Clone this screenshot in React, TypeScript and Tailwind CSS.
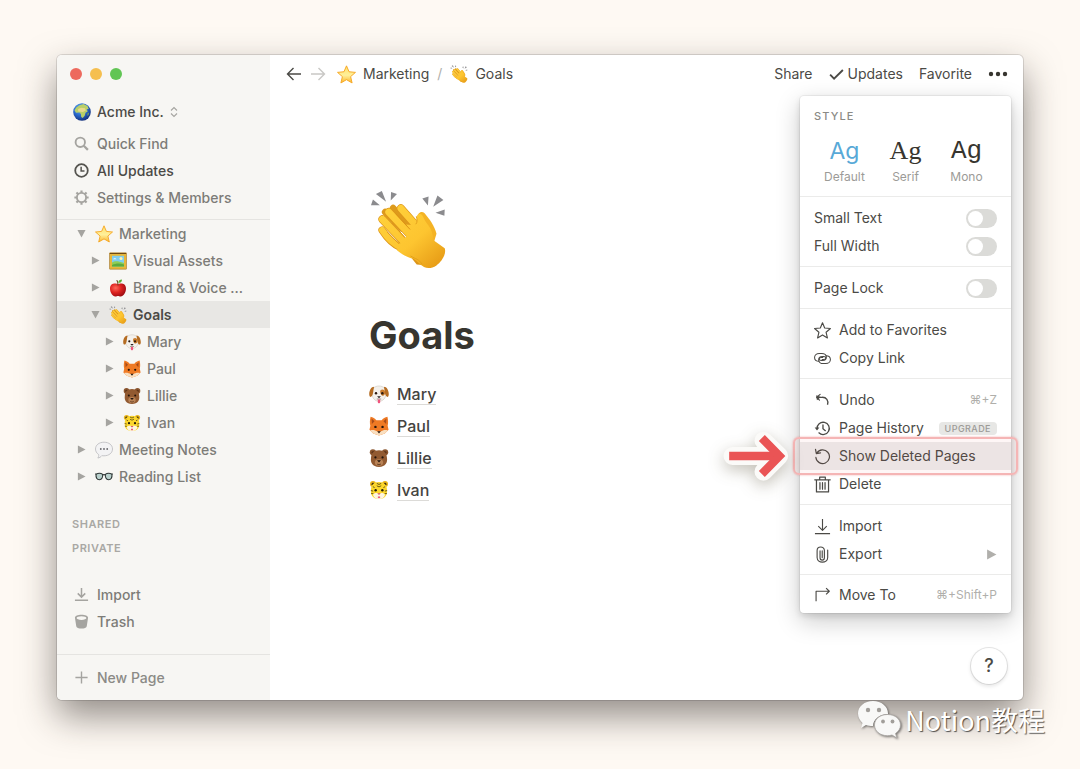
import React from "react";

type P = { className?: string };

const svgProps = (vb = "0 0 18 18") => ({ viewBox: vb, fill: "none", "aria-hidden": true as const });

/* ---------- pictograms ---------- */

const Star = ({ className }: P) => (
  <svg {...svgProps()} className={className}>
    <defs>
      <linearGradient id="starFill" x1="0" y1="0" x2="0" y2="1">
        <stop offset="0" stopColor="#ffdf6a" />
        <stop offset=".55" stopColor="#fff09a" />
        <stop offset="1" stopColor="#fbb52c" />
      </linearGradient>
    </defs>
    <path d="M9 .8l2.4 5.6 6.100.6-4.600 4 1.400 6L9 13.900 3.700 17l1.400-6L.5 7l6.100-.6z" fill="url(#starFill)" stroke="#f5a623" strokeWidth=".9" strokeLinejoin="round" />
  </svg>
);

const Clap = ({ className }: P) => (
  <svg {...svgProps("27 27 236 240")} className={className}>
    <defs>
      <linearGradient id="clapSkin" x1="60" y1="80" x2="220" y2="260" gradientUnits="userSpaceOnUse">
        <stop offset="0" stopColor="#ffd23c" />
        <stop offset=".6" stopColor="#fdc530" />
        <stop offset="1" stopColor="#e99f18" />
      </linearGradient>
    </defs>
    <path fill="#8b8b8e" d="M31 73l6-17 21 17zM46 39l18-9 13 33zM91 59l1-26 18 6zM187 53l19-6-2 27zM220 78l13-34 18 13zM227 96l28-10-1 19z" />
    <path fill="#dc9518" d="M148 226l22 27 18 2 8-28z" />
    <path fill="#f4b325" d="M172 110c0-12 12-22 22-12 14 17 30 38 36 62l-12 40-46-50z" />
    <g strokeLinecap="round">
      <path stroke="#dd9a1c" strokeWidth="20" d="M98 82l50 54M74 94l50 50" />
      <path stroke="#dd9518" strokeWidth="25" d="M122 83l58 66" />
      <path stroke="url(#clapSkin)" strokeWidth="21" d="M122 83l60 68" />
      <path stroke="#dd9518" strokeWidth="25" d="M85 94l75 80" />
      <path stroke="url(#clapSkin)" strokeWidth="21" d="M85 94l77 82" />
      <path stroke="#dd9518" strokeWidth="25" d="M66 116l74 78" />
      <path stroke="url(#clapSkin)" strokeWidth="21" d="M66 116l76 80" />
      <path stroke="#dd9518" strokeWidth="23" d="M65 149c14 22 32 42 58 54" />
      <path stroke="url(#clapSkin)" strokeWidth="19" d="M65 149c14 22 32 42 60 54" />
    </g>
    <path
      fill="url(#clapSkin)"
      d="M138 132l24 2c6-4 9-12 8-24 0-11 13-14 18-4 5 9 8 18 17 28 10 12 14 28 16 46l34 24c6 16-9 41-25 52-14 10-28 10-38 5-13-7-20-17-32-25-22-5-38-16-50-26l6-16 24-28z"
    />
    <path stroke="#dd9315" strokeWidth="3" strokeLinecap="round" d="M107 100l42 46M95 128l38 42M82 156l34 34" />
    <path stroke="#e2a01b" strokeWidth="3" strokeLinecap="round" d="M168 130c5-6 3-14 1-22M152 228c16 10 24 8 34 24" />
  </svg>
);

const Globe = ({ className }: P) => (
  <svg {...svgProps()} className={className}>
    <defs>
      <radialGradient id="ocean" cx=".4" cy=".3" r=".75">
        <stop offset="0" stopColor="#69b6f0" />
        <stop offset=".55" stopColor="#2866c8" />
        <stop offset="1" stopColor="#132b74" />
      </radialGradient>
    </defs>
    <circle cx="9" cy="9" r="8.800" fill="url(#ocean)" />
    <path d="M6.500 2.200l4-1.200 4 2 1.200 3-2 .3 1 2.200-2.200 1.200-.8 3-2 2.300-1.500-1-.3-3-1.400-1.500-3.500.2-1.500-2.500 1.800-2.600z" fill="#b9cf68" />
    <path d="M5 6.200l3-1.500 4 .6.8 2.200-3 1.500-4.500-.5z" fill="#e8d98d" />
    <path d="M14.500 10.500l1.500-1-.6 2.800-1 .5z" fill="#88b04e" />
  </svg>
);

const Picture = ({ className }: P) => (
  <svg {...svgProps()} className={className}>
    <rect x=".3" y=".5" width="17.400" height="17" rx=".8" fill="#a9781a" />
    <rect x="1" y="2" width="16" height="14.800" fill="#e7b73a" />
    <rect x="3" y="3.800" width="12" height="10.600" fill="#7fcdf0" />
    <circle cx="12" cy="6.500" r="1.500" fill="#fff6b0" />
    <path d="M4 7.200c1-1.500 3-1.200 3.500 0z" fill="#fff" />
    <path d="M3 10.500c3-2 6-1.500 12 .5v3.400H3z" fill="#8fce55" />
    <path d="M3 13c4-2 8-2 12-.5v1.900H3z" fill="#5cab3f" />
    <path d="M1 1.500h16" stroke="#6f4a12" />
  </svg>
);

const Apple = ({ className }: P) => (
  <svg {...svgProps()} className={className}>
    <defs>
      <radialGradient id="appleRed" cx=".35" cy=".35" r=".7">
        <stop offset="0" stopColor="#ff6a5a" />
        <stop offset=".5" stopColor="#de2320" />
        <stop offset="1" stopColor="#9d0c12" />
      </radialGradient>
    </defs>
    <path d="M9 5.200c2-1.300 8-1.600 8 4.300 0 4-2.700 8-5.300 8-1.300 0-1.700-.5-2.700-.5s-1.500.5-2.700.5C3.700 17.500 1 13.500 1 9.500c0-5.900 6-5.600 8-4.300z" fill="url(#appleRed)" />
    <path d="M9 6c0-2 0-3-1-4.500" stroke="#6b4320" strokeWidth="1.100" strokeLinecap="round" />
    <path d="M9.200 3.800C9.200 1.500 11 .4 13 .4c.1 2.300-1.500 3.600-3.800 3.400z" fill="#5cae35" />
  </svg>
);

const Dog = ({ className }: P) => (
  <svg {...svgProps()} className={className}>
    <path d="M9 1.800c4 0 6.500 2.700 6.500 6.200 0 4.500-3 7.600-6.500 7.600S2.500 12.500 2.500 8c0-3.500 2.500-6.200 6.500-6.200z" fill="#f4f1ec" stroke="#c9c1b6" strokeWidth=".5" />
    <path d="M4.600 2.400C2 2.400.2 5.600.2 9.200c0 2.200 1.300 3.200 2.400 1.700C4 9 3.800 5 4.600 2.400zM13.400 2.400c2.600 0 4.400 3.200 4.400 6.800 0 2.200-1.300 3.200-2.400 1.700-1.400-1.900-1.200-5.900-2-8.500z" fill="#b56c22" />
    <path d="M10.500 5.500c1.500-1.300 4-.5 4 2 0 2-1 3.300-2.500 3-1.600-.4-2.500-3.600-1.500-5z" fill="#c97b2c" />
    <circle cx="6.300" cy="8.300" r="1.100" fill="#2b1a10" />
    <circle cx="12" cy="8.300" r="1.100" fill="#2b1a10" />
    <path d="M7.300 11h3.400L9 12.800z" fill="#2a2020" />
    <path d="M7 13.500h4" stroke="#7a6a60" strokeWidth=".6" />
    <path d="M7.900 14h2.200v2.200c0 1.500-2.200 1.500-2.200 0z" fill="#f0537c" />
  </svg>
);

const Fox = ({ className }: P) => (
  <svg {...svgProps()} className={className}>
    <path d="M1.400.6C3.500 1 5.500 2.300 6.600 3.800h4.800C12.500 2.300 14.500 1 16.600.6c.7 3 .8 5.800.2 8.200l.8 3.600-3.400 3.300L9 17.500l-5.200-1.800L.4 12.400l.8-3.600C.6 6.400.7 3.600 1.400.6z" fill="#ef7a24" />
    <path d="M2.300 2.300l2.700 2.500-2.400 2.400zM15.700 2.300L13 4.800l2.400 2.400z" fill="#a84c19" />
    <path d="M1 13c2.500-.8 5 0 6.500 1h3c1.500-1 4-1.800 6.500-1l-2.800 2.700L9 17.500l-5.200-1.800z" fill="#f9dfc0" />
    <circle cx="5.800" cy="9.800" r="1.100" fill="#26150c" />
    <circle cx="12.200" cy="9.800" r="1.100" fill="#26150c" />
    <path d="M7.400 13.800h3.200L9 15.800z" fill="#20160f" />
  </svg>
);

const Bear = ({ className }: P) => (
  <svg {...svgProps()} className={className}>
    <circle cx="3.500" cy="3.900" r="2.800" fill="#8a552e" />
    <circle cx="14.500" cy="3.900" r="2.800" fill="#8a552e" />
    <circle cx="3.600" cy="4.100" r="1.400" fill="#5c3418" />
    <circle cx="14.400" cy="4.100" r="1.400" fill="#5c3418" />
    <path d="M9 2c5 0 7 3 7.200 7 .6 4-1.200 8-7.200 8s-7.800-4-7.200-8C2 5 4 2 9 2z" fill="#925a31" />
    <ellipse cx="9" cy="13" rx="3.700" ry="2.900" fill="#b98356" />
    <circle cx="5.800" cy="8.500" r="1" fill="#20120a" />
    <circle cx="12.200" cy="8.500" r="1" fill="#20120a" />
    <path d="M7.200 11h3.600L9 13.100z" fill="#21140c" />
    <path d="M7.300 14.400c1 .8 2.400.8 3.400 0" stroke="#4b2a16" strokeWidth=".7" />
  </svg>
);

const Tiger = ({ className }: P) => (
  <svg {...svgProps()} className={className}>
    <circle cx="3.600" cy="3.600" r="2.700" fill="#e9b51a" />
    <circle cx="14.400" cy="3.600" r="2.700" fill="#e9b51a" />
    <circle cx="3.600" cy="3.800" r="1.300" fill="#403012" />
    <circle cx="14.400" cy="3.800" r="1.300" fill="#403012" />
    <path d="M9 1.800c5 0 7 3 7.200 6.700.6 4.500-1.200 8.500-7.200 8.500s-7.800-4-7.200-8.500C2 4.800 4 1.800 9 1.800z" fill="#fcd72c" />
    <path d="M3.500 13c2-1.500 3.500-1.700 5.500-.9 2-.8 3.500-.6 5.500.9-.8 2.800-2.500 4-5.500 4s-4.700-1.200-5.500-4z" fill="#fdf6df" />
    <path d="M7 3l2 1 2-1M7 5.200l2 1 2-1M1.700 9.500l2 .5M1.900 12.200l2 .1M16.300 9.500l-2 .5M16.100 12.200l-2 .1M3.500 6l1.500.8M14.500 6l-1.500.8" stroke="#5a4a14" strokeWidth=".8" />
    <circle cx="6" cy="9.200" r="1.100" fill="#20190c" />
    <circle cx="12" cy="9.200" r="1.100" fill="#20190c" />
    <path d="M7.500 12h3L9 13.600z" fill="#d2485a" />
    <path d="M8 14.800h2v1.500H8z" fill="#e95b78" />
  </svg>
);

const Speech = ({ className }: P) => (
  <svg {...svgProps()} className={className}>
    <path d="M9 1.200c5 0 8.500 2.900 8.500 6.800S14 14.800 9 14.800c-.8 0-1.500 0-2.200-.2-.9 1.300-2.200 2.200-4 2.400.8-.9 1.100-2.200.8-3.500C1.700 12.200.5 10.300.5 8 .5 4.100 4 1.200 9 1.200z" fill="#f3f3f4" stroke="#b9b9bd" strokeWidth=".8" />
    <circle cx="5.800" cy="8" r=".9" fill="#66666a" />
    <circle cx="9" cy="8" r=".9" fill="#66666a" />
    <circle cx="12.200" cy="8" r=".9" fill="#66666a" />
  </svg>
);

const Glasses = ({ className }: P) => (
  <svg {...svgProps()} className={className}>
    <path d="M1 6.200c2-1 5.200-.9 6.700.2.200 2.800-.7 5.300-3.300 5.300S.8 9.500 1 6.200zM17 6.200c-2-1-5.200-.9-6.700.2-.2 2.800.7 5.300 3.300 5.300s3.600-2.200 3.400-5.500z" fill="#b8d0cc" stroke="#2d3534" strokeWidth="1.100" />
    <path d="M7.700 7c.8-.6 1.800-.6 2.600 0M.3 6h1M16.700 6h1" stroke="#2d3534" strokeWidth="1.100" />
  </svg>
);

/* ---------- line icons ---------- */

const line = { stroke: "currentColor", strokeWidth: 1.2, strokeLinecap: "round" as const, strokeLinejoin: "round" as const };

const SearchIcon = ({ className }: P) => (
  <svg {...svgProps("0 0 16 16")} className={className}>
    <circle cx="6.700" cy="6.700" r="5" stroke="currentColor" strokeWidth="2" />
    <path d="M10.400 10.400l4.400 4.400" stroke="currentColor" strokeWidth="2.400" />
  </svg>
);
const ClockIcon = ({ className }: P) => (
  <svg {...svgProps("0 0 16 16")} className={className}>
    <circle cx="8" cy="8" r="6.700" stroke="currentColor" strokeWidth="1.900" />
    <path d="M7.600 4v4.600h3.600" stroke="currentColor" strokeWidth="1.600" />
  </svg>
);
const GearIcon = ({ className }: P) => (
  <svg {...svgProps("0 0 16 16")} className={className}>
    <circle cx="8" cy="8" r="4.900" stroke="currentColor" strokeWidth="2" />
    <path d="M8 .4v2.800M8 12.800v2.800M.4 8h2.800M12.800 8h2.800M2.600 2.600l2 2M11.400 11.400l2 2M2.600 13.400l2-2M11.400 4.600l2-2" stroke="currentColor" strokeWidth="2.300" />
  </svg>
);
const DownloadIcon = ({ className }: P) => (
  <svg {...svgProps("0 0 16 16")} className={className}>
    <path d="M8 1v9.500M4 6.800l4 4 4-4M1 14.200h14" stroke="currentColor" strokeWidth="1.600" />
  </svg>
);
const BucketIcon = ({ className }: P) => (
  <svg {...svgProps("0 0 16 16")} className={className}>
    <path d="M8 .8c4 0 7 1.300 7 3.200l-1.400 9c-.2 1.600-2.600 2.500-5.600 2.500S2.600 14.600 2.400 13L1 4C1 2.100 4 .8 8 .8zm0 1.600c-3 0-5.200.8-5.200 1.900S5 6.300 8 6.300s5.200-.9 5.200-2S11 2.400 8 2.400z" fill="currentColor" fillRule="evenodd" />
  </svg>
);
const PlusIcon = ({ className }: P) => (
  <svg {...svgProps("0 0 16 16")} className={className}>
    <path d="M8 1.500v13M1.500 8h13" stroke="currentColor" strokeWidth="1.500" />
  </svg>
);
const UpDownIcon = ({ className }: P) => (
  <svg {...svgProps("0 0 8 12")} className={className}>
    <path d="M1 4.500l3-3 3 3M1 7.500l3 3 3-3" stroke="currentColor" strokeWidth="1.100" />
  </svg>
);
const ArrowIcon = ({ className }: P) => (
  <svg {...svgProps("0 0 16 16")} className={className}>
    <path d="M15 8H1.500M7.500 2L1.500 8l6 6" stroke="currentColor" strokeWidth="1.400" />
  </svg>
);
const CheckIcon = ({ className }: P) => (
  <svg {...svgProps("0 0 16 16")} className={className}>
    <path d="M1.200 8.200l4.200 4.300L14.800 3.200" stroke="currentColor" strokeWidth="2" />
  </svg>
);
const DotsIcon = ({ className }: P) => (
  <svg {...svgProps("0 0 20 6")} className={className}>
    <circle cx="3" cy="3" r="2.200" fill="currentColor" />
    <circle cx="10" cy="3" r="2.200" fill="currentColor" />
    <circle cx="17" cy="3" r="2.200" fill="currentColor" />
  </svg>
);
const StarOutline = ({ className }: P) => (
  <svg {...svgProps()} className={className}>
    <path d="M9 .8l2.300 5.600 6.100.5-4.600 4 1.400 6L9 13.700l-5.200 3.200 1.400-6-4.600-4 6.100-.5z" {...line} />
  </svg>
);
const LinkIcon = ({ className }: P) => (
  <svg {...svgProps()} className={className}>
    <path d="M5.500 12C2.500 12 .6 10.300.6 7.900S2.700 3.600 5.500 3.600h2.800c2.700 0 4.800 1.700 4.800 3.900s-1.700 3.600-3.900 3.600H7.600c-1.200 0-2-.7-2-1.600s.8-1.600 2-1.600h1.800" {...line} strokeWidth={1.100} />
    <path d="M12.500 6c3 0 4.900 1.700 4.900 4.100s-2.100 4.300-4.900 4.300H9.700c-2.700 0-4.800-1.700-4.800-3.900s1.700-3.600 3.900-3.600h1.600c1.200 0 2 .7 2 1.600s-.8 1.600-2 1.600H8.600" {...line} strokeWidth={1.100} />
  </svg>
);
const UndoIcon = ({ className }: P) => (
  <svg {...svgProps()} className={className}>
    <path d="M4 5.600h4.500c4.600-.2 7.200 3.400 5.800 7.900" {...line} strokeWidth={1.400} strokeLinecap="butt" />
    <path d="M2.300 3.500l.8 5.200 4.100-3.300z" fill="currentColor" />
    <path d="M6.500 2.500L2.800 5.600l3 3" {...line} />
  </svg>
);
const HistoryIcon = ({ className }: P) => (
  <svg {...svgProps()} className={className}>
    <path d="M3.200 9.300A6.500 6.500 0 1 1 5.200 13.600" {...line} strokeWidth={1.400} />
    <path d="M.7 8h5l-2.500 3.200z" fill="currentColor" />
    <path d="M9.500 5.300v4l2.500 2" {...line} strokeWidth={1.400} />
  </svg>
);
const RestoreIcon = ({ className }: P) => (
  <svg {...svgProps()} className={className}>
    <path d="M3 5.500A7.200 7.200 0 1 1 2 10M1.600 1.500l.9 4.400 4.400-.7" {...line} strokeWidth={1.300} />
  </svg>
);
const BinIcon = ({ className }: P) => (
  <svg {...svgProps()} className={className}>
    <path d="M.8 4h16.400M6 4V1.200h6V4M2.600 4v12.900h12.800V4M6.300 6.900v7M9 6.900v7M11.700 6.900v7" {...line} strokeWidth={1.300} />
  </svg>
);
const ImportIcon = ({ className }: P) => (
  <svg {...svgProps()} className={className}>
    <path d="M9 1v12M4.500 8.700L9 13.200l4.500-4.500M1 16.500h16" {...line} strokeLinecap="butt" />
  </svg>
);
const ClipIcon = ({ className }: P) => (
  <svg {...svgProps()} className={className}>
    <path d="M6.400 5.200v7.300c0 3.300 4.600 3.300 4.600 0V4.800c0-5-7.700-5-7.700 0v7.500c0 6.400 11.200 6.400 11.200 0V4.300M8.700 5v7.500" {...line} />
  </svg>
);
const MoveIcon = ({ className }: P) => (
  <svg {...svgProps()} className={className}>
    <path d="M2.200 15V4.500h14M12.800 1.200l3.400 3.300-3.400 3.300" {...line} strokeLinecap="butt" />
  </svg>
);
const Triangle = ({ className }: P) => (
  <svg {...svgProps("0 0 10 10")} className={className}>
    <path d="M1 .5l8.500 4.500L1 9.500z" fill="currentColor" />
  </svg>
);

/* ---------- sidebar ---------- */

type IconType = (p: P) => React.JSX.Element;

const SideLink = ({ icon: Icon, label, strong }: { icon: IconType; label: string; strong?: boolean }) => (
  <a href="#" className={strong ? "flex h-[27px] items-center gap-2 pl-[17px] text-[#4b4a46]" : "flex h-[27px] items-center gap-2 pl-[17px] text-[#7d7c78]"}>
    <Icon className={strong ? "size-[15px] shrink-0 text-[#55544f]" : "size-[15px] shrink-0 text-[#a5a4a0]"} />
    {label}
  </a>
);

type Page = { icon: IconType; label: string; level: 0 | 1 | 2; open?: boolean; active?: boolean };

const pages: Page[] = [
  { icon: Star, label: "Marketing", level: 0, open: true },
  { icon: Picture, label: "Visual Assets", level: 1 },
  { icon: Apple, label: "Brand & Voice ...", level: 1 },
  { icon: Clap, label: "Goals", level: 1, open: true, active: true },
  { icon: Dog, label: "Mary", level: 2 },
  { icon: Fox, label: "Paul", level: 2 },
  { icon: Bear, label: "Lillie", level: 2 },
  { icon: Tiger, label: "Ivan", level: 2 },
  { icon: Speech, label: "Meeting Notes", level: 0 },
  { icon: Glasses, label: "Reading List", level: 0 },
];

const indent = ["pl-5", "pl-[34px]", "pl-12"];

const Sidebar = () => (
  <nav className="flex w-[213px] shrink-0 flex-col rounded-l-[5px] bg-[#f7f6f3] text-sm font-medium text-[#7d7c78]">
    <div className="flex h-[38px] items-center gap-2 pl-[13px]">
      <span className="size-3 rounded-full bg-[#ed6a5e]" />
      <span className="size-3 rounded-full bg-[#f5bf4f]" />
      <span className="size-3 rounded-full bg-[#61c554]" />
    </div>
    <button className="flex h-[37px] items-center gap-1.5 pl-4 text-left text-[#4b4a46]">
      <Globe className="size-[18px]" />
      Acme Inc.
      <UpDownIcon className="h-3 w-2 text-[#a5a4a0]" />
    </button>
    <SideLink icon={SearchIcon} label="Quick Find" />
    <SideLink icon={ClockIcon} label="All Updates" strong />
    <SideLink icon={GearIcon} label="Settings & Members" />
    <ul className="mt-2 border-t border-[#e5e4e1]">
      {pages.map((p) => (
        <li key={p.label}>
          <a href="#" className={`flex h-[27px] items-center ${indent[p.level]} ${p.active ? "bg-[#e8e7e4] font-semibold text-[#4b4a46]" : ""}`}>
            <Triangle className={p.open ? "size-[9px] shrink-0 rotate-90 text-[#a5a4a0]" : "size-[9px] shrink-0 text-[#a5a4a0]"} />
            <p.icon className="mr-1.5 ml-[9px] size-[18px] shrink-0" />
            {p.label}
          </a>
        </li>
      ))}
    </ul>
    <div className="mt-[22px] pl-[15px] text-[11px] leading-6 font-semibold tracking-wider text-[#a9a8a4]">
      <h2>SHARED</h2>
      <h2>PRIVATE</h2>
    </div>
    <div className="mt-[21px]">
      <SideLink icon={DownloadIcon} label="Import" />
      <SideLink icon={BucketIcon} label="Trash" />
    </div>
    <button className="mt-auto flex h-[46px] items-center gap-2 border-t border-[#e5e4e1] pl-[17px] text-[#8b8a86]">
      <PlusIcon className="size-[15px] text-[#a5a4a0]" />
      New Page
    </button>
  </nav>
);

/* ---------- options menu ---------- */

const Group = ({ children }: { children: React.ReactNode }) => <div className="border-t border-[#ebebea] pt-[7px] pb-1.5">{children}</div>;

const Toggle = ({ id, label }: { id: string; label: string }) => (
  <div className="flex h-7 items-center justify-between px-3.5">
    <label htmlFor={id}>{label}</label>
    <input
      id={id}
      type="checkbox"
      className="h-[19px] w-[31px] appearance-none rounded-full bg-[#dbdbd8] p-0.5 before:block before:size-[15px] before:rounded-full before:bg-white checked:bg-[#5aaee0] checked:before:ml-3"
    />
  </div>
);

const Item = ({ icon: Icon, label, children }: { icon: IconType; label: string; children?: React.ReactNode }) => (
  <button className="flex h-7 w-full items-center gap-2 px-3.5 text-left">
    <Icon className="size-[17px] shrink-0" />
    <span className="grow">{label}</span>
    {children}
  </button>
);

const styles = [
  { name: "Default", face: "text-[23px] text-[#58a9d7]" },
  { name: "Serif", face: "font-['Liberation_Serif',serif] text-[26px] text-[#37352f]" },
  { name: "Mono", face: "font-['Liberation_Mono',monospace] text-[26px] text-[#37352f]" },
];

const Pointer = ({ className }: P) => (
  <svg {...svgProps("22 145 206 162")} className={className}>
    <g stroke="#fbfaf8" strokeWidth="54" strokeLinejoin="round" strokeLinecap="round">
      <path d="M50 226h130M143 180l47 46-47 47" />
    </g>
    <path d="M40 226h145" stroke="#ea5455" strokeWidth="25" />
    <path d="M138 172l53 54-53 54" stroke="#ea5455" strokeWidth="25" />
  </svg>
);

const OptionsMenu = () => (
  <div className="absolute top-[41px] right-3 w-[211px] rounded bg-white text-sm text-[#4b4a46] shadow-[0_0_0_1px_rgba(15,15,15,0.05),0_3px_6px_rgba(15,15,15,0.12),0_8px_24px_rgba(15,15,15,0.22)]">
    <h2 className="px-3.5 pt-3 text-[11px] leading-4 font-medium tracking-widest text-[#8b8a86]">STYLE</h2>
    <div className="flex h-[72px] justify-between px-3.5 pt-[11px]">
      {styles.map((s) => (
        <button key={s.name} className="flex w-[61px] flex-col items-center">
          <span className={`flex h-8 items-center leading-8 ${s.face}`}>Ag</span>
          <span className="mt-0.5 text-xs leading-4 text-[#9c9b97]">{s.name}</span>
        </button>
      ))}
    </div>
    <Group>
      <Toggle id="small-text" label="Small Text" />
      <Toggle id="full-width" label="Full Width" />
    </Group>
    <Group>
      <Toggle id="page-lock" label="Page Lock" />
    </Group>
    <Group>
      <Item icon={StarOutline} label="Add to Favorites" />
      <Item icon={LinkIcon} label="Copy Link" />
    </Group>
    <Group>
      <Item icon={UndoIcon} label="Undo">
        <kbd className="font-[Inter,sans-serif] text-xs text-[#b0afab]">⌘+Z</kbd>
      </Item>
      <Item icon={HistoryIcon} label="Page History">
        <span className="rounded-sm bg-[#e7e7e5] px-1.5 text-[9px] leading-[13px] font-medium tracking-wider text-[#9c9b97]">UPGRADE</span>
      </Item>
      <div className="relative bg-[#ededec]">
        <Item icon={RestoreIcon} label="Show Deleted Pages" />
        <div className="pointer-events-none absolute -inset-x-[7px] -inset-y-[5px] rounded-md border-2 border-[#f5b5b5] bg-[#eb5757]/5 shadow-[0_0_2px_rgba(235,87,87,0.5)]" />
        <Pointer className="absolute top-1/2 right-full mr-2 h-[54px] w-[69px] -translate-y-1/2 drop-shadow-[0_5px_8px_rgba(60,50,20,0.3)]" />
      </div>
      <Item icon={BinIcon} label="Delete" />
    </Group>
    <Group>
      <Item icon={ImportIcon} label="Import" />
      <Item icon={ClipIcon} label="Export">
        <Triangle className="size-[11px] text-[#b0afab]" />
      </Item>
    </Group>
    <div className="border-t border-[#ebebea] pt-1.5 pb-1">
      <Item icon={MoveIcon} label="Move To">
        <kbd className="font-[Inter,sans-serif] text-xs text-[#b0afab]">⌘+Shift+P</kbd>
      </Item>
    </div>
  </div>
);

/* ---------- page ---------- */

const people = [
  { icon: Dog, name: "Mary" },
  { icon: Fox, name: "Paul" },
  { icon: Bear, name: "Lillie" },
  { icon: Tiger, name: "Ivan" },
];

const Watermark = () => (
  <div className="absolute right-[35px] bottom-[29px] flex items-center gap-1 text-white">
    <svg {...svgProps("0 0 44 40")} className="h-10 w-11 drop-shadow-[1px_1px_1px_rgba(0,0,0,0.5)]">
      <path d="M16 1c8.500 0 15 5.500 15 12.500v.5c-8 0-15 5-15 12-3 0-5-.2-7-1l-5 3 1.500-5C3 20.500 1 17.500 1 13.500 1 6.500 7.500 1 16 1z" fill="#f8f8f7" />
      <path d="M30.500 14.500C38 14.500 43.500 19 43.500 25c0 3.500-2 6.500-5 8.500l1.500 4.500-5-3c-1.500.5-3 .7-4.500.7-7.500 0-13-4.700-13-10.700s5.500-10.500 13-10.500z" fill="#f8f8f7" stroke="#a8a5a1" strokeWidth=".8" />
      <g fill="#a19e9a">
        <circle cx="11" cy="10" r="2.200" />
        <circle cx="22" cy="10" r="2.200" />
        <circle cx="26" cy="21.500" r="1.900" />
        <circle cx="35.500" cy="21.500" r="1.900" />
      </g>
    </svg>
    <span className="font-['Noto_Sans_CJK_SC',sans-serif] text-[27px] leading-10 [text-shadow:1px_1px_1px_rgba(0,0,0,0.65)]">Notion教程</span>
  </div>
);

export default function App() {
  return (
    <div className="relative flex min-h-screen flex-col bg-[#fef9f3] px-[57px] pt-[55px] pb-[69px] font-[Inter,sans-serif]">
      <div className="relative flex grow rounded-[5px] bg-white shadow-[0_0_0_1px_rgba(0,0,0,0.12),0_16px_36px_rgba(40,32,28,0.5)]">
        <Sidebar />
        <main className="min-w-0 grow text-[#4b4a46]">
          <header className="flex h-[38px] items-center justify-between pr-[15px] pl-4 text-sm">
            <div className="flex items-center">
              <button aria-label="Back">
                <ArrowIcon className="size-4" />
              </button>
              <button aria-label="Forward" className="ml-2 text-[#c9c8c5]">
                <ArrowIcon className="size-4 rotate-180" />
              </button>
              <a href="#" className="ml-[11px] flex items-center gap-[7px]">
                <Star className="size-[19px]" />
                Marketing
              </a>
              <span className="px-2 text-[#b0afab]">/</span>
              <a href="#" className="flex items-center gap-[7px]">
                <Clap className="size-[18px]" />
                Goals
              </a>
            </div>
            <div className="flex items-center gap-4">
              <button>Share</button>
              <button className="flex items-center gap-1">
                <CheckIcon className="size-[15px]" />
                Updates
              </button>
              <button>Favorite</button>
              <button aria-label="More options" className="text-[#37352f]">
                <DotsIcon className="h-1.5 w-5" />
              </button>
            </div>
          </header>
          <article className="px-[99px] pt-[97px] text-[#37352f]">
            <Clap className="size-[79px]" />
            <h1 className="mt-11 text-[38px] leading-[44px] font-bold">Goals</h1>
            <ul className="mt-[21px] text-base font-medium text-[#45443f]">
              {people.map((p) => (
                <li key={p.name} className="flex h-8 items-center gap-2">
                  <p.icon className="size-5" />
                  <a href="#" className="border-b border-[#dcdbd8] leading-5">
                    {p.name}
                  </a>
                </li>
              ))}
            </ul>
          </article>
        </main>
        <OptionsMenu />
        <button aria-label="Help" className="absolute right-4 bottom-4 size-9 rounded-full bg-white text-lg font-medium text-[#4b4a46] shadow-[0_0_0_1px_rgba(15,15,15,0.1),0_2px_4px_rgba(15,15,15,0.12)]">
          ?
        </button>
      </div>
      <Watermark />
    </div>
  );
}
